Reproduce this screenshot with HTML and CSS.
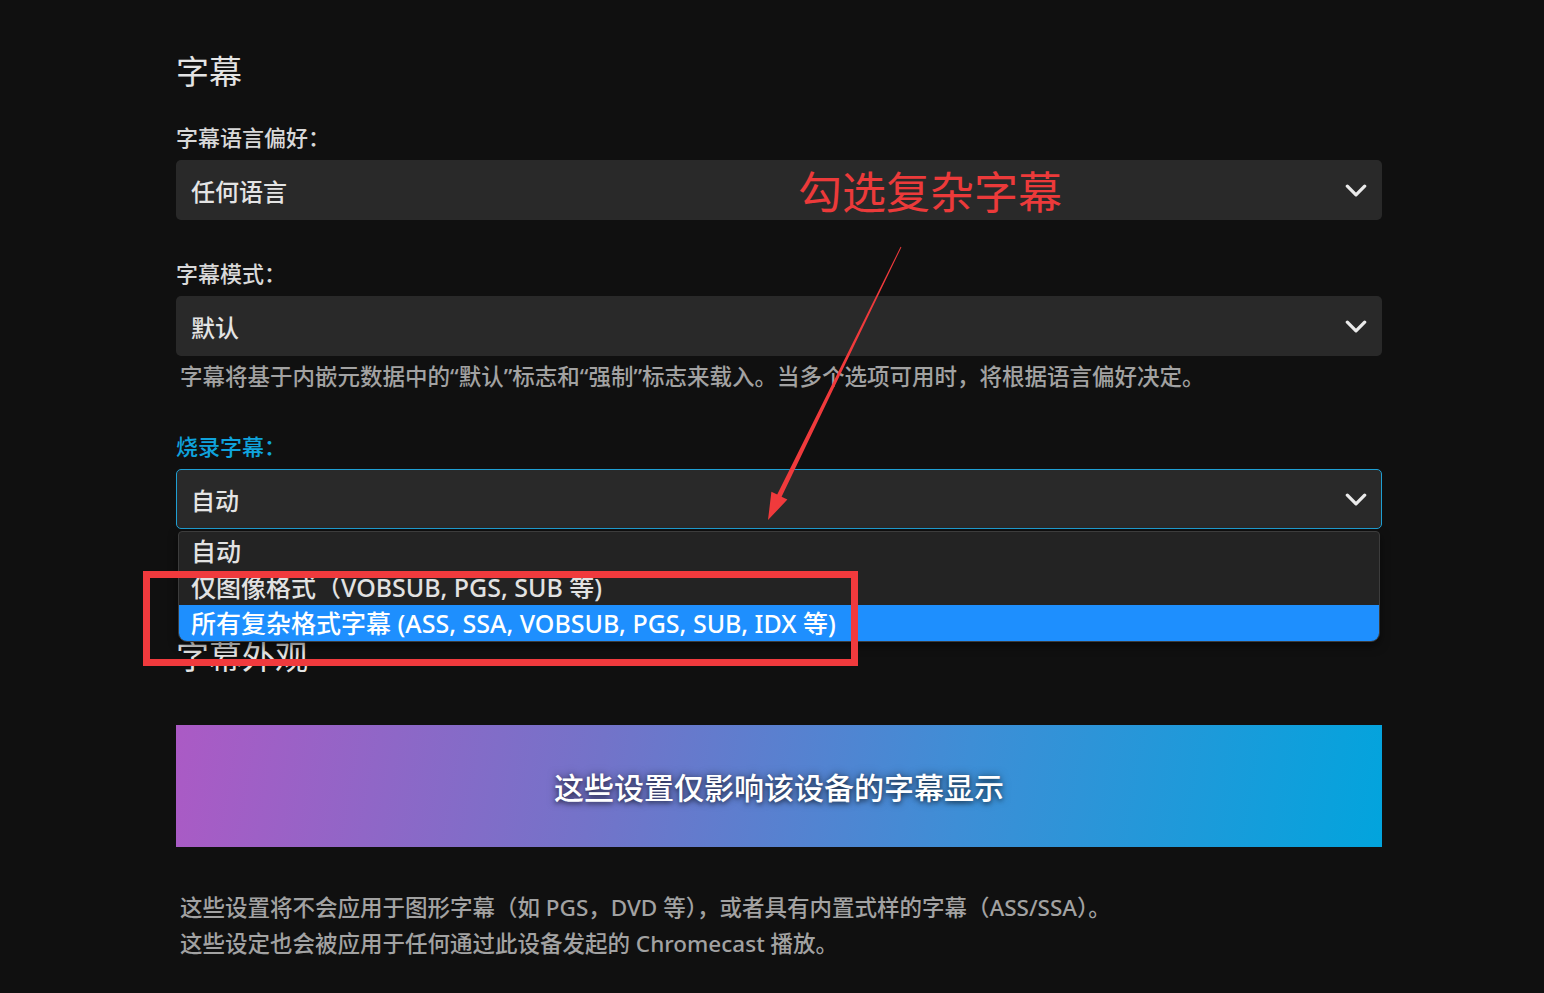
FILE: index.html
```html
<!DOCTYPE html>
<html lang="zh-CN">
<head>
<meta charset="utf-8">
<title>字幕设置</title>
<link rel="stylesheet" href="styles.css">
</head>
<body>
<div class="page">
  <h2 class="section-title">字幕</h2>

  <div class="field first">
    <div class="label">字幕语言偏好：</div>
    <div class="select"><span>任何语言</span><svg class="chev" viewBox="0 0 20 12"><path d="M2 2 L10 10 L18 2"/></svg></div>
  </div>

  <div class="field">
    <div class="label">字幕模式：</div>
    <div class="select"><span>默认</span><svg class="chev" viewBox="0 0 20 12"><path d="M2 2 L10 10 L18 2"/></svg></div>
    <div class="desc">字幕将基于内嵌元数据中的“默认”标志和“强制”标志来载入。当多个选项可用时，将根据语言偏好决定。</div>
  </div>

  <div class="field focused">
    <div class="label">烧录字幕：</div>
    <div class="select-wrap">
      <div class="select"><span>自动</span><svg class="chev" viewBox="0 0 20 12"><path d="M2 2 L10 10 L18 2"/></svg></div>
      <ul class="dropdown">
        <li>自动</li>
        <li>仅图像格式（VOBSUB, PGS, SUB 等)</li>
        <li class="active">所有复杂格式字幕 (ASS, SSA, VOBSUB, PGS, SUB, IDX 等)</li>
      </ul>
    </div>
  </div>

  <h2 class="section-title second">字幕外观</h2>

  <div class="banner">这些设置仅影响该设备的字幕显示</div>

  <div class="notes">
    <p>这些设置将不会应用于图形字幕（如 PGS，DVD 等），或者具有内置式样的字幕（ASS/SSA）。</p>
    <p>这些设定也会被应用于任何通过此设备发起的 Chromecast 播放。</p>
  </div>

  <div class="annot-text">勾选复杂字幕</div>
  <div class="annot-box"></div>
  <svg class="annot-arrow" viewBox="0 0 1544 993" width="1544" height="993">
    <polygon points="901.4,247.2 781.6,496.8 787.4,499.6 768,520 771.4,491.8 777.2,494.6 900.6,246.8"/>
  </svg>
</div>
</body>
</html>
```

FILE: styles.css
```css
html, body {
  margin: 0;
  padding: 0;
  background: #101010;
}
body {
  font-family: "Noto Sans", "Noto Sans CJK SC", sans-serif;
  color: #e2e2e2;
  width: 1544px;
  height: 993px;
  overflow: hidden;
}
.page {
  position: relative;
  box-sizing: border-box;
  width: 1544px;
  height: 993px;
  padding: 52px 162px 0 176px;
}
.section-title {
  margin: 0;
  font-size: 33px;
  line-height: 40px;
  font-weight: 400;
  color: #e4e4e4;
}
.section-title.second {
  margin-top: 108px;
}
.field {
  margin-top: 38px;
}
.field.first {
  margin-top: 30px;
}
.field.focused {
  margin-top: 39px;
}
.label {
  font-size: 22px;
  line-height: 30px;
  font-weight: 500;
  color: #d8d8d8;
  margin-bottom: 8px;
}
.field.focused .label {
  color: #0fa3dc;
}
.select {
  box-sizing: border-box;
  height: 60px;
  background: #292929;
  border-radius: 5px;
  display: flex;
  align-items: center;
  justify-content: space-between;
  padding: 0 15px 0 15px;
  font-size: 24px;
  font-weight: 500;
  color: #e4e4e4;
}
.field.focused .select {
  border: 1px solid #1f9fd3;
  padding-left: 14px;
  padding-right: 14px;
}
.chev {
  width: 22px;
  height: 13px;
  fill: none;
  stroke: #eaeaea;
  stroke-width: 3;
  stroke-linecap: round;
  stroke-linejoin: round;
}
.desc {
  margin-top: 6px;
  padding-left: 4px;
  font-size: 22.5px;
  line-height: 30px;
  font-weight: 500;
  color: #a2a2a2;
  white-space: nowrap;
}
.select-wrap {
  position: relative;
}
.dropdown {
  position: absolute;
  left: 2px;
  right: 2px;
  top: 62px;
  margin: 0;
  padding: 1px 0 0 0;
  list-style: none;
  background: #232323;
  border: 1px solid #3c3c3c;
  border-radius: 4px 4px 9px 9px;
  overflow: hidden;
  box-shadow: 0 4px 10px rgba(0,0,0,0.5);
  z-index: 2;
}
.dropdown li {
  height: 36px;
  line-height: 36px;
  padding-left: 12px;
  font-size: 25px;
  font-weight: 500;
  color: #e2e2e2;
  white-space: nowrap;
}
.dropdown li.active {
  background: #1e8ffe;
  color: #ffffff;
}
.banner {
  margin-top: 48px;
  height: 122px;
  display: flex;
  align-items: center;
  justify-content: center;
  background: linear-gradient(100deg, #ab5ac5 0%, #7373c9 35%, #3e8ed6 65%, #02a4dd 100%);
  font-size: 30px;
  font-weight: 500;
  color: #ffffff;
  text-shadow: 0 0 8px rgba(0,0,0,0.55), 0 2px 4px rgba(0,0,0,0.4);
}
.notes {
  margin-top: 43px;
  padding-left: 4px;
}
.notes p {
  margin: 0;
  font-size: 22.5px;
  line-height: 36px;
  font-weight: 500;
  color: #a2a2a2;
  white-space: nowrap;
}
.annot-text {
  position: absolute;
  left: 798px;
  top: 164px;
  font-size: 44px;
  line-height: 56px;
  color: #ec3a3a;
  z-index: 5;
  white-space: nowrap;
}
.annot-box {
  position: absolute;
  left: 143px;
  top: 571px;
  width: 715px;
  height: 95px;
  box-sizing: border-box;
  border: 7px solid #f03a3d;
  z-index: 5;
}
.annot-arrow {
  position: absolute;
  left: 0;
  top: 0;
  z-index: 6;
  pointer-events: none;
}
.annot-arrow polygon {
  fill: #f03a3c;
}
```
